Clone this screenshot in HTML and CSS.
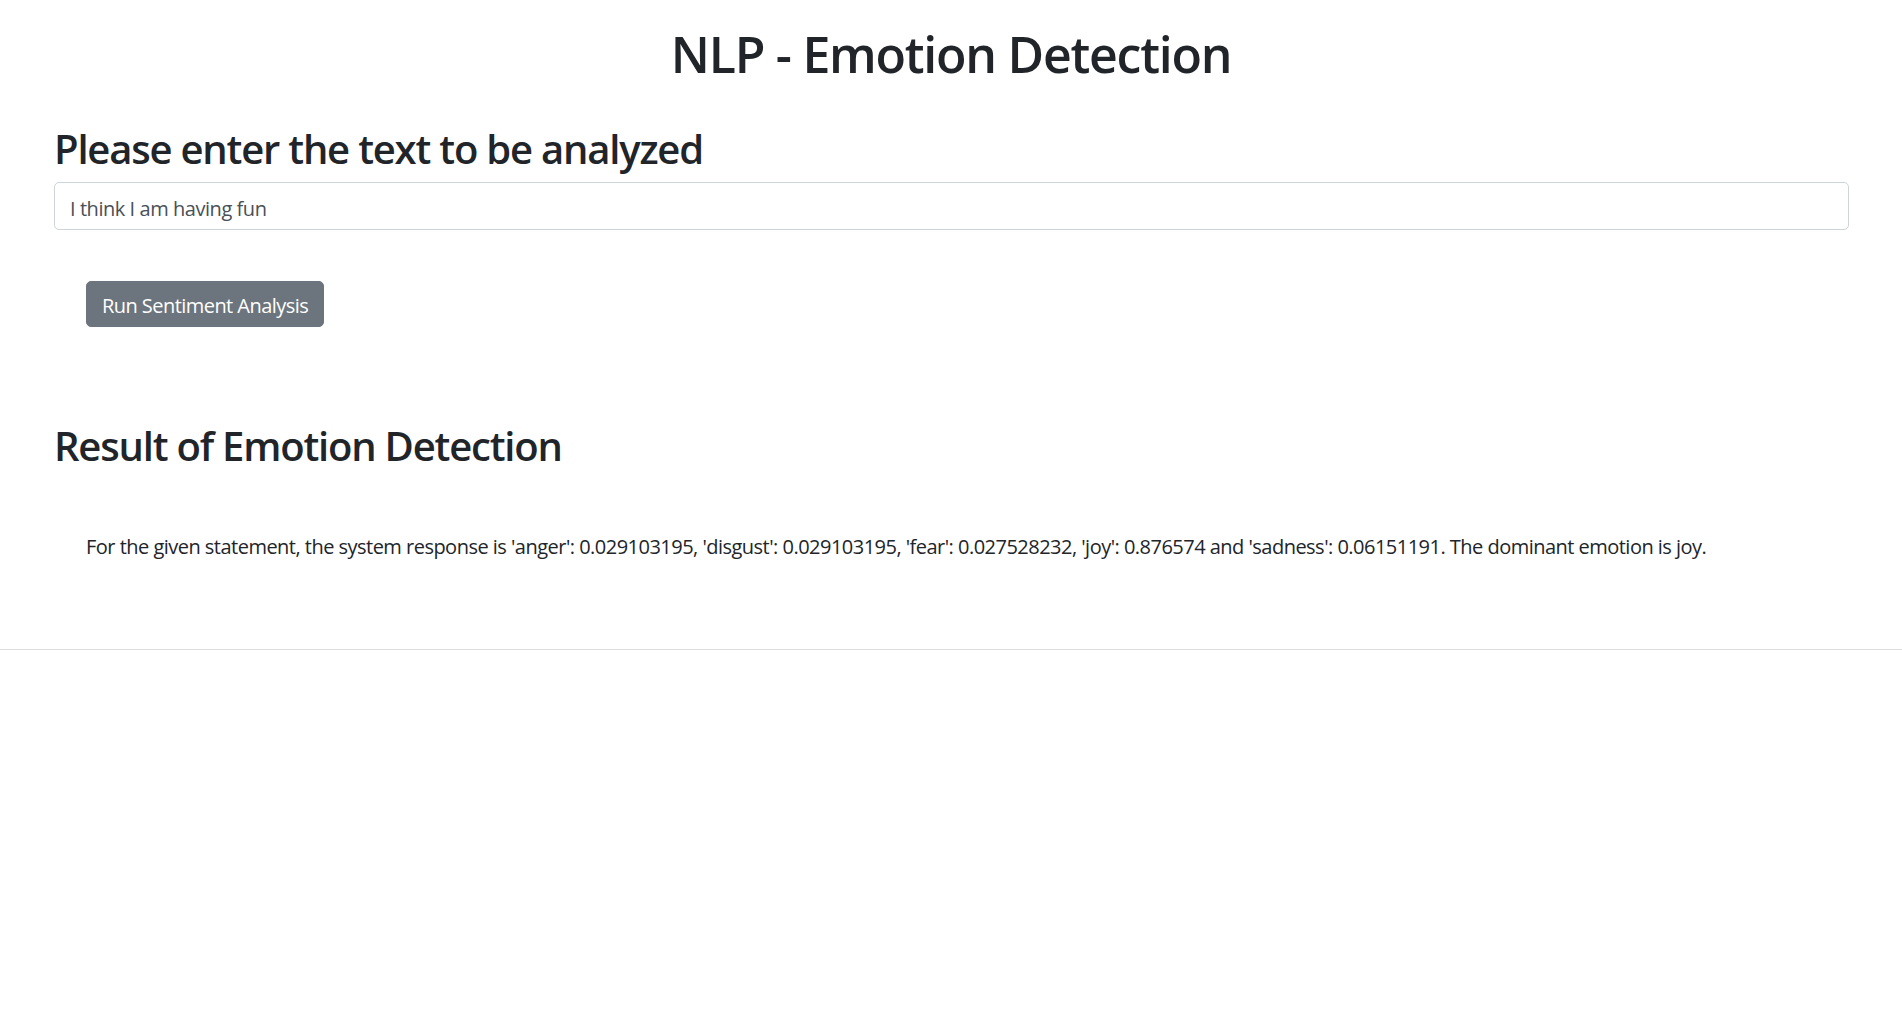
FILE: index.html
```html
<!DOCTYPE html>
<html lang="en">
<head>
<meta charset="utf-8">
<title>NLP - Emotion Detection</title>
<link rel="stylesheet" href="styles.css">
</head>
<body>
<div class="page">
  <h1 class="title">NLP - Emotion Detection</h1>
  <div class="content">
    <h2 class="section-title">Please enter the text to be analyzed</h2>
    <input class="text-input" type="text" value="I think I am having fun">
    <div class="actions">
      <button class="btn-run" type="button">Run Sentiment Analysis</button>
    </div>
    <h2 class="section-title result-title">Result of Emotion Detection</h2>
    <p class="result-text">For the given statement, the system response is 'anger': 0.029103195, 'disgust': 0.029103195, 'fear': 0.027528232, 'joy': 0.876574 and 'sadness': 0.06151191. The dominant emotion is joy.</p>
  </div>
  <hr class="divider">
</div>
</body>
</html>
```

FILE: styles.css
```css
html, body {
  margin: 0;
  padding: 0;
  background: #ffffff;
}

body {
  font-family: "Segoe UI", "Open Sans", "Noto Sans", sans-serif;
  font-size: 20px;
  line-height: 1.5;
  color: #212529;
  letter-spacing: -0.52px;
}

.page {
  display: flex;
  flex-direction: column;
}

.title {
  margin: 24px 0 0 0;
  font-size: 50px;
  font-weight: 600;
  line-height: 1.2;
  letter-spacing: -1.25px;
  text-align: center;
  color: #212529;
}

.content {
  display: flex;
  flex-direction: column;
  align-items: flex-start;
  padding: 0 53px 0 54px;
}

.section-title {
  margin: 41px 0 9px 0;
  font-size: 40px;
  font-weight: 600;
  line-height: 1.2;
  letter-spacing: -1.2px;
  color: #212529;
}

.text-input {
  box-sizing: border-box;
  width: 100%;
  height: 47.5px;
  padding: 10px 15px 5px 15px;
  font-family: inherit;
  font-size: 20px;
  line-height: 1.5;
  letter-spacing: -0.45px;
  color: #495057;
  background: #ffffff;
  border: 1.25px solid #ced4da;
  border-radius: 5px;
  outline: none;
}

.actions {
  display: flex;
  padding: 51px 0 0 32px;
}

.btn-run {
  box-sizing: border-box;
  height: 46px;
  padding: 5px 15px 0 15px;
  font-family: inherit;
  font-size: 20px;
  line-height: 1.5;
  letter-spacing: -0.55px;
  color: #ffffff;
  background: #6c757d;
  border: 1px solid #6c757d;
  border-radius: 5px;
  cursor: pointer;
}

.result-title {
  margin: 95px 0 0 0;
}

.result-text {
  margin: 62px 0 0 32px;
  font-size: 20px;
  line-height: 1.5;
}

.divider {
  width: 100%;
  margin: 87px 0 0 0;
  border: 0;
  border-top: 1px solid #dddddd;
  height: 0;
}
```
